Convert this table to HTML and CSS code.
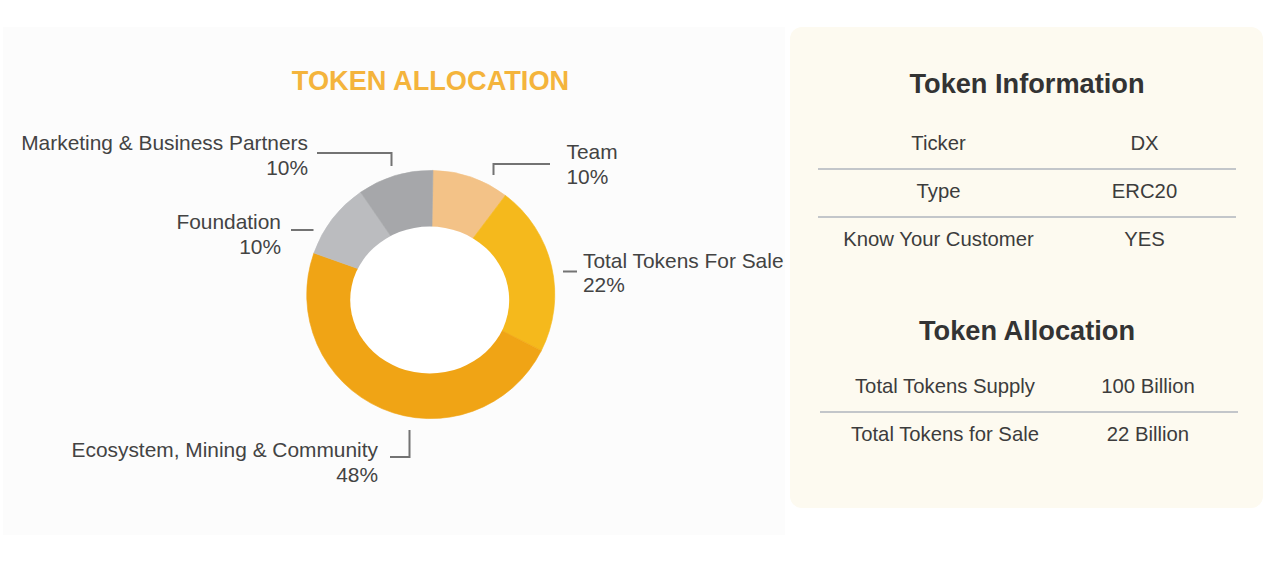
FILE: index.html
```html
<!DOCTYPE html>
<html lang="en">
<head>
<meta charset="utf-8">
<title>Token Allocation</title>
<link rel="stylesheet" href="styles.css">
</head>
<body>
<main class="page">
  <section class="chart-panel">
    <h2 class="chart-title">TOKEN ALLOCATION</h2>
    <div class="chart-canvas">
      <svg class="donut" width="782" height="435" viewBox="0 0 782 435" aria-hidden="true">
        <g class="slices">
          <path class="slice slice--team" d="M427.8 194.4 L429.96 70.42 A124 124 0 0 1 502.4 95.4 Z"/>
          <path class="slice slice--sale" d="M427.8 194.4 L502.4 95.4 A124 124 0 0 1 538.3 250.7 Z"/>
          <path class="slice slice--eco" d="M427.8 194.4 L538.3 250.7 A124 124 0 0 1 310.9 153.0 Z"/>
          <path class="slice slice--foundation" d="M427.8 194.4 L310.9 153.0 A124 124 0 0 1 357.6 92.2 Z"/>
          <path class="slice slice--marketing" d="M427.8 194.4 L357.6 92.2 A124 124 0 0 1 429.96 70.42 Z"/>
        </g>
        <ellipse class="hole" cx="426.7" cy="200" rx="79.5" ry="73.5"/>
        <g class="connectors">
          <polyline points="314,53 388.5,53 388.5,66"/>
          <polyline points="547,64 490.5,64 490.5,75"/>
          <polyline points="288,130 310.5,130"/>
          <polyline points="560,171.5 574,171.5"/>
          <polyline points="387,357 406.5,357 406.5,330"/>
        </g>
      </svg>
      <div class="label label--marketing"><span class="label-name">Marketing &amp; Business Partners</span><span class="label-pct">10%</span></div>
      <div class="label label--team"><span class="label-name">Team</span><span class="label-pct">10%</span></div>
      <div class="label label--foundation"><span class="label-name">Foundation</span><span class="label-pct">10%</span></div>
      <div class="label label--sale"><span class="label-name">Total Tokens For Sale</span><span class="label-pct">22%</span></div>
      <div class="label label--eco"><span class="label-name">Ecosystem, Mining &amp; Community</span><span class="label-pct">48%</span></div>
    </div>
  </section>

  <aside class="info-card">
    <div class="info-block info-block--info">
      <h3 class="info-title">Token Information</h3>
      <div class="info-table">
        <div class="info-row"><span class="info-key">Ticker</span><span class="info-val">DX</span></div>
        <div class="info-row"><span class="info-key">Type</span><span class="info-val">ERC20</span></div>
        <div class="info-row"><span class="info-key">Know Your Customer</span><span class="info-val">YES</span></div>
      </div>
    </div>
    <div class="info-block info-block--alloc">
      <h3 class="info-title">Token Allocation</h3>
      <div class="info-table">
        <div class="info-row"><span class="info-key">Total Tokens Supply</span><span class="info-val">100 Billion</span></div>
        <div class="info-row"><span class="info-key">Total Tokens for Sale</span><span class="info-val">22 Billion</span></div>
      </div>
    </div>
  </aside>
</main>
</body>
</html>
```

FILE: styles.css
```css
* {
  box-sizing: border-box;
}

html, body {
  margin: 0;
  padding: 0;
  background: #ffffff;
}

body {
  font-family: "Liberation Sans", Arial, Helvetica, sans-serif;
  color: #3e3e3e;
}

.page {
  display: flex;
  align-items: flex-start;
  gap: 5px;
  padding: 27px 0 0 3px;
}

/* ---------- Left: chart ---------- */
.chart-panel {
  width: 782px;
  height: 508px;
  background: #fcfcfc;
  padding-top: 38px;
}

.chart-title {
  margin: 0 0 4px;
  padding-left: 73px;
  text-align: center;
  font-size: 27.2px;
  line-height: 31px;
  font-weight: 700;
  color: #f4b43c;
}

.chart-canvas {
  position: relative;
  width: 782px;
  height: 435px;
}

.donut {
  display: block;
}

.slice {
  stroke-width: 0.6;
}

.slice--team { fill: #f3c287; stroke: #f3c287; }
.slice--sale { fill: #f5b91c; stroke: #f5b91c; }
.slice--eco { fill: #f0a415; stroke: #f0a415; }
.slice--foundation { fill: #bbbcbf; stroke: #bbbcbf; }
.slice--marketing { fill: #a6a7aa; stroke: #a6a7aa; }

.hole {
  fill: #ffffff;
}

.connectors polyline {
  fill: none;
  stroke: #737373;
  stroke-width: 2;
}

.label {
  position: absolute;
  font-size: 20.9px;
  line-height: 24.5px;
  color: #434343;
  white-space: nowrap;
}

.label-name,
.label-pct {
  display: block;
}

.label--marketing { right: 477px; top: 31.3px; text-align: right; }
.label--team { left: 563.5px; top: 40.3px; }
.label--foundation { right: 504px; top: 110.3px; text-align: right; }
.label--sale { left: 580px; top: 148.7px; }
.label--eco { right: 407px; top: 338.3px; text-align: right; }

/* ---------- Right: info card ---------- */
.info-card {
  width: 473px;
  height: 481px;
  background: #fdfaf0;
  border-radius: 12px;
  padding: 41px 27px 0 28px;
}

.info-title {
  margin: 0;
  text-align: center;
  font-size: 27.2px;
  line-height: 31px;
  font-weight: 700;
  color: #333333;
}

.info-block--info .info-title {
  margin-bottom: 23px;
}

.info-block--alloc {
  margin-top: 51px;
}

.info-block--alloc .info-title {
  margin-bottom: 19px;
}

.info-table {
  font-size: 20.3px;
  line-height: 23px;
  color: #3c3c3c;
}

.info-row {
  display: grid;
  grid-template-columns: 241px 1fr;
  padding: 10px 6px 13px 0;
  border-bottom: 2px solid #c3c6ca;
  text-align: center;
}

.info-row:last-child {
  border-bottom: none;
}

.info-block--alloc .info-table {
  margin: 0 -2px 0 2px;
}

.info-block--alloc .info-row {
  grid-template-columns: 250px 1fr;
  padding-right: 12px;
}
```
